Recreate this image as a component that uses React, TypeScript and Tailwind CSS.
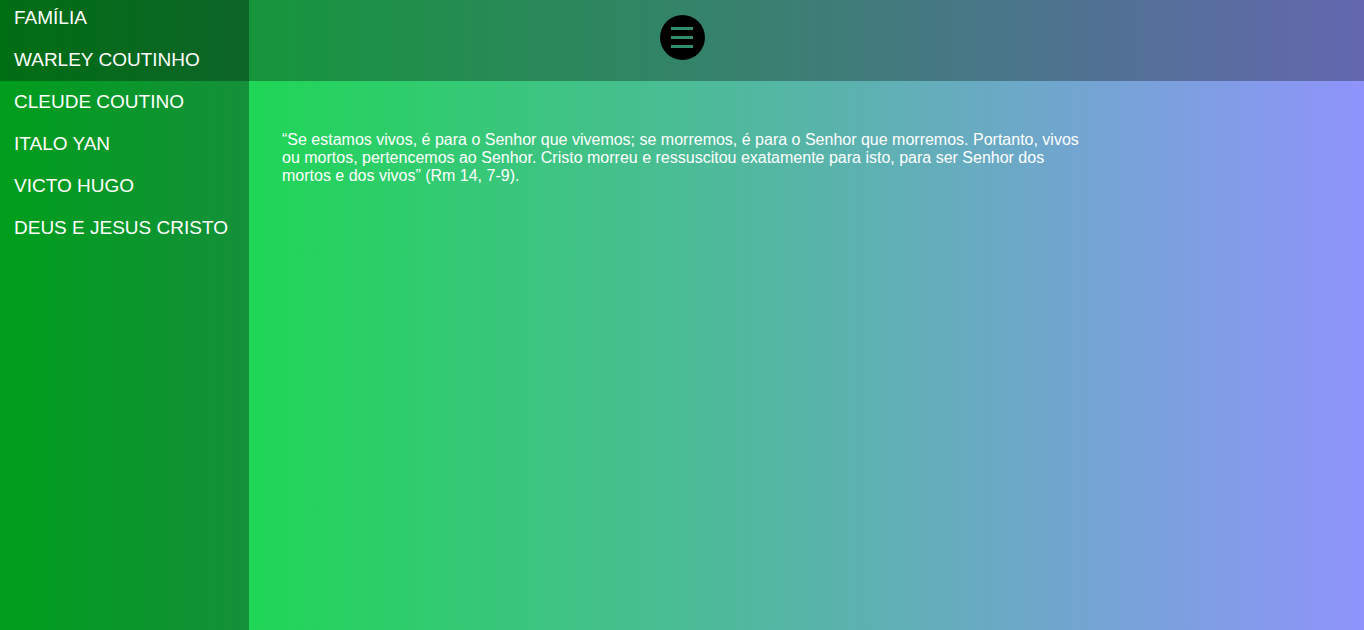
const familia: string[] = [
	"Família",
	"Warley Coutinho",
	"Cleude Coutino",
	"Italo Yan",
	"Victo Hugo",
	"Deus e Jesus Cristo",
];

function MenuButton() {
	return (
		<button className="w-[45px] h-[45px] rounded-full bg-black flex flex-col items-center justify-center gap-[6px]">
			<span className="block w-[22px] h-[3px] bg-[#2f8f6c]" />
			<span className="block w-[22px] h-[3px] bg-[#2f8f6c]" />
			<span className="block w-[22px] h-[3px] bg-[#2f8f6c]" />
		</button>
	);
}

export default function App() {
	return (
		<div
			className="relative flex w-full h-[630px] overflow-hidden text-white"
			style={{ fontFamily: '"Liberation Sans", Arial, sans-serif' }}
		>
			<nav className="w-[249px] shrink-0 h-full bg-[linear-gradient(to_right,#009e1c,#14903a)]">
				{/* texto acima da faixa escura do topo */}
				<ul className="relative z-10 flex flex-col">
					{familia.map((nome, index) => (
						<li
							key={index}
							className="h-[42px] pt-[7px] pl-[14px] text-[19px] leading-[22px] uppercase"
						>
							{nome}
						</li>
					))}
				</ul>
			</nav>

			<main className="flex-1 h-full bg-[linear-gradient(to_right,#1fd655,#8f94fb)] pt-[131px] pl-[33px]">
				<p className="max-w-[805px] text-[16px] leading-[18px]">
					“Se estamos vivos, é para o Senhor que vivemos; se morremos, é para o
					Senhor que morremos. Portanto, vivos ou mortos, pertencemos ao Senhor.
					Cristo morreu e ressuscitou exatamente para isto, para ser Senhor dos
					mortos e dos vivos” (Rm 14, 7-9).
				</p>
			</main>

			<header className="absolute top-0 left-0 w-full h-[81px] bg-black/30 flex items-start justify-center pt-[15px]">
				<MenuButton />
			</header>
		</div>
	);
}
